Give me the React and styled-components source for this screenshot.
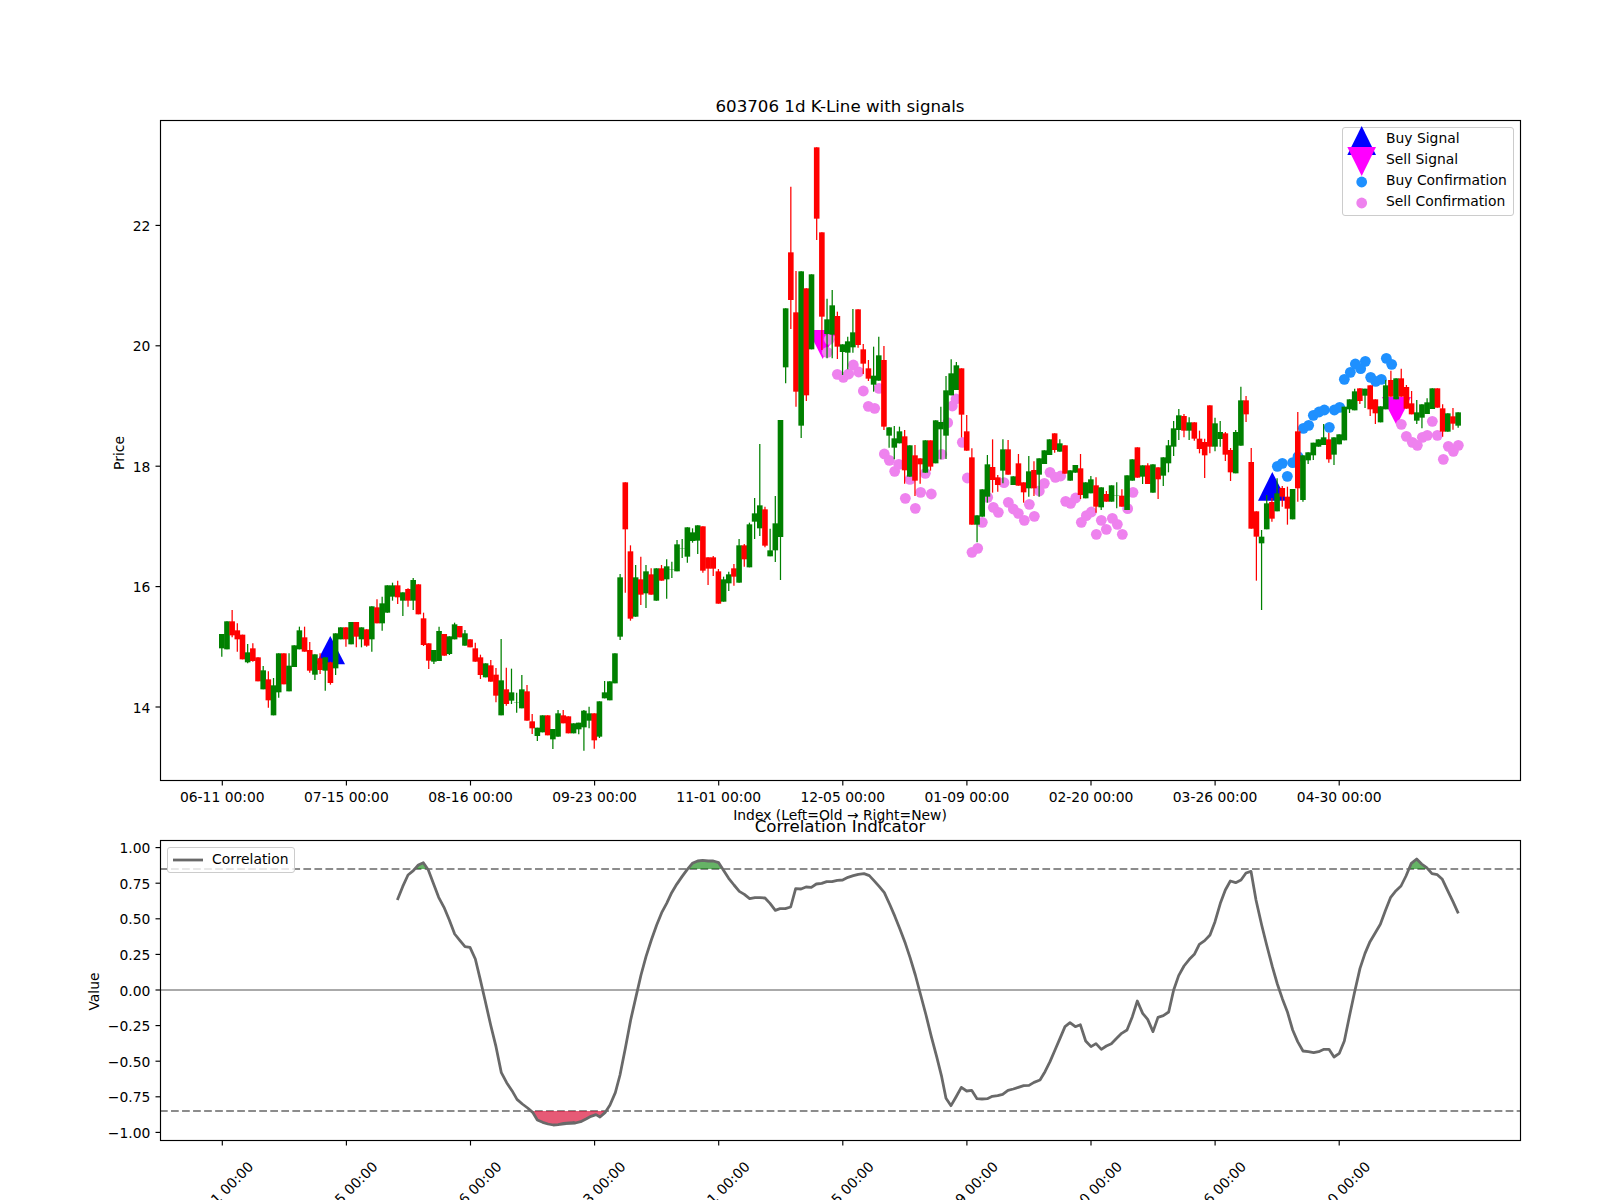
import React from "react";
import styled, { createGlobalStyle } from "styled-components";

const GlobalStyle = createGlobalStyle`
  body {
    margin: 0;
    background: #fff;
    font-family: "DejaVu Sans", sans-serif;
  }
`;

const Figure = styled.div`
  display: flex;
  flex-direction: column;
  width: 1600px;
  height: 1200px;
  overflow: hidden;
  background: #fff;
`;

const Panel = styled.div`
  position: relative;
  flex: none;
  width: 1600px;
  height: ${(p) => p.$h}px;
`;

const Plot = styled.svg`
  display: block;
  overflow: visible;
`;

const Frame = styled.rect`
  fill: none;
  stroke: #000;
  stroke-width: 1.15;
`;

const Tick = styled.line`
  stroke: #000;
  stroke-width: 1.15;
`;

const TickLabel = styled.text`
  font-family: "DejaVu Sans", sans-serif;
  font-size: 13.89px;
  fill: #000;
  text-anchor: ${(p) => p.$anchor || "middle"};
`;

const Title = styled.text`
  font-family: "DejaVu Sans", sans-serif;
  font-size: 16.67px;
  fill: #000;
  text-anchor: middle;
`;

const Wick = styled.line`
  stroke: ${(p) => (p.$c === "G" ? "#008000" : "#ff0000")};
  stroke-width: 1.25;
`;

const Body = styled.rect`
  fill: ${(p) => (p.$c === "G" ? "#008000" : "#ff0000")};
`;

const Dot = styled.circle`
  fill: ${(p) => p.$color};
`;

const Marker = styled.polygon`
  fill: ${(p) => p.$color};
`;

const Level = styled.line`
  stroke: #8c8c8c;
  stroke-width: 2.08;
  stroke-dasharray: 7.7 3.33;
`;

const ZeroLine = styled.line`
  stroke: #aaaaaa;
  stroke-width: 2.08;
`;

const CorrLine = styled.polyline`
  fill: none;
  stroke: #696969;
  stroke-width: 2.78;
  stroke-linejoin: round;
`;

const CorrFill = styled.polygon`
  fill: ${(p) => p.$color};
  fill-opacity: ${(p) => p.$alpha};
`;

const LegendBox = styled.div`
  position: absolute;
  box-sizing: border-box;
  left: ${(p) => p.$left}px;
  top: ${(p) => p.$top}px;
  width: ${(p) => p.$w}px;
  height: ${(p) => p.$h}px;
  padding-top: ${(p) => p.$padTop || 0}px;
  display: flex;
  flex-direction: column;
  background: rgba(255, 255, 255, 0.8);
  border: 1.1px solid #cccccc;
  border-radius: 3px;
`;

const LegendRow = styled.div`
  display: flex;
  align-items: center;
  height: 21px;
  font-size: 13.89px;
  line-height: 21px;
  color: #000;
  white-space: nowrap;
`;

const LegendKey = styled.svg`
  flex: none;
  width: ${(p) => p.$w}px;
  height: 21px;
  overflow: visible;
`;

// each block is read in its own y offset, coordinates are 3x, [colour, top, bottom, high, low]
const blocks = [
  [560, [
    ["G",222,265,222,290],["G",184,268],["R",184,226,150,232],["R",211,238,190,275],["R",224,298],
    ["G",277,307,252,310],["R",265,303,250,305],["R",292,364],["G",331,388,318,388],["R",358,421,334,443],
    ["G",376,466,354,466],["G",280,397,280,413],["R",280,373],["G",317,394,280,394],["G",256,321],
    ["G",211,268,200,268],["R",232,275,200,275],["R",270,332,246,338],["G",283,344,283,360],["R",295,330,280,342],
    ["G",292,332,292,392],["R",307,369,305,374],["G",220,325,220,345],["G",202,238],["R",202,238,202,260],
    ["G",186,253],["R",186,230,186,262],["G",202,238,202,262],["R",208,257,208,260],["G",139,238,139,275],
    ["R",142,190,118,190],["G",130,190,110,212],["G",76,158],["G",76,110,68,122],["R",76,112,62,132],
    ["G",97,122,97,168],["R",87,122,85,140],["G",60,122,54,150],["R",73,163],["R",175,255,158,258],
    ["R",250,302,250,327],["G",270,305,270,312],["G",213,303,200,303],["R",222,287],["G",229,282,229,285],
    ["G",193,238,188,238],["R",198,232],["G",220,257,210,257],["R",238,262],["R",265,305,248,305],
    ["R",292,345,284,357],["G",310,352],["R",316,365,300,365],["R",344,407,324,427],["G",361,466,237,466],
    ["R",388,432,323,437],["G",397,422,326,432],["G",428,429,398,458],["G",388,445,345,445],["R",394,482,375,482],
    ["R",484,505,462,522],["G",503,528,503,543],["G",466,517],["R",466,526],["G",507,538,507,567],
    ["G",460,530,450,530],["R",466,490,450,490],["R",469,520],["G",490,520],["G",488,508,488,523],
    ["G",452,502,450,572],["G",460,482,440,505],["R",460,541,460,566],["G",424,530,424,534],["G",397,415,363,415],
    ["G",364,421],["G",280,370],
  ]],
  [440, [
    ["G",412,590,402,600],["R",127,268,127,458],["R",334,536,316,542],["G",412,530,375,530],["R",418,464,350,495],
    ["G",394,460,375,504],["R",403,464,385,464],["G",385,482],["R",385,422,375,422],["G",379,418,358,476],
    ["G",389,390,365,414],["G",313,394,300,394],["G",325,326,297,354],["G",262,350,262,368],["G",277,303,265,308],
    ["G",256,302,256,342],["R",259,392,259,398],["R",352,386,352,435],["R",352,386,348,408],["R",394,491,387,491],
    ["G",418,485,410,485],["G",403,430,395,453],["R",385,410,372,437],["G",316,428,297,428],["R",316,358,312,380],
    ["G",253,382,248,382],["G",220,245,174,297],["G",196,265,12,288],["R",208,317,200,322],["G",331,349,266,349],
    ["G",250,331,168,366],
  ]],
  [130, [
    ["G",870,1221,870,1350],["G",535,712,535,760],["R",367,510,170,597],["R",547,785,423,830],["G",424,887,424,924],
    ["R",475,796,475,813],["G",433,658],["R",52,266,52,330],["R",307,560,307,660],["G",568,612,506,685],
    ["G",526,614,480,685],["R",558,650,545,687],["G",643,666,643,735],["G",634,668,620,718],["G",607,652,537,668],
    ["R",538,645,538,653],["R",658,701,642,732],["R",715,746,690,753],["G",737,764,650,785],["G",676,752,620,752],
  ]],
  [320, [
    ["R",120,320,78,330],["G",322,347,322,383],["G",355,383,318,418],["G",334,370,320,370],["R",349,451,330,491],
    ["G",376,470],["R",406,482,375,528],["R",415,433,415,491],["G",361,458],["R",361,440,361,452],
    ["G",301,430],["G",306,328,260,418],["G",211,347,168,417],["G",160,226,118,226],["G",136,210,126,210],
    ["R",145,284,145,352],["R",334,392,285,392],["R",412,614,385,614],["G",586,614,586,667],["G",508,590],
    ["G",433,530,405,548],["R",441,480,358,518],["R",472,495,465,515],["G",388,452,358,490],["R",388,464,360,464],
    ["G",469,495],["R",430,497,402,497],["R",487,517,487,548],["G",454,505,408,530],["R",450,505,424,528],
    ["G",415,464,415,530],["G",391,432],["G",358,405],["R",340,390,340,398],["G",370,395,358,395],
    ["R",376,461],["G",451,482],["G",435,458],["R",445,525,402,537],["G",487,535],
    ["G",478,520,468,520],["R",496,560,472,578],["G",502,562,502,570],["R",522,545,513,545],["G",496,545],
    ["G",526,527,487,565],["R",527,560,508,560],["G",466,570],["G",418,482],["R",382,473],
  ]],
  [380, [
    ["G",256,290,256,312],["R",256,312,250,312],["G",253,338],["R",262,298,262,357],["G",232,287,232,318],
    ["G",196,250,180,277],["G",145,200,123,228],["G",106,150,87,180],["R",108,152,102,172],["G",127,152,112,180],
    ["R",127,176,127,182],["R",176,207,152,220],["R",186,226,176,294],["R",76,200,76,220],["G",130,200,113,214],
    ["G",156,177,123,200],["R",160,224,156,243],["R",210,277,204,303],["G",156,280,150,280],["G",61,197,20,197],
    ["R",61,103,48,126],
  ]],
  [330, [
    ["R",396,596,354,596],["R",544,620,544,752],["G",620,640,600,840],["G",520,598,495,598],["R",516,566,504,575],
    ["G",490,544,445,544],["R",474,500,468,530],["R",500,536,470,584],["G",477,568],["R",304,475,246,515],
    ["G",376,510,376,515],["G",367,391,367,402],["G",338,376,338,390],["G",328,350],["G",322,345,282,345],
    ["R",328,388,308,398],["G",322,374,322,405],["G",313,343],["G",230,331],["G",208,238,208,249],
    ["G",184,241,176,241],["R",175,213,175,222],["G",176,197,176,234],["R",166,238,166,258],["R",208,250,208,282],
    ["G",229,277],["G",166,238,150,238],["R",150,200,122,200],["G",145,208],["R",145,200,116,200],
    ["R",171,236,165,236],["R",220,253,183,253],["G",247,272,210,282],["G",223,263,223,295],["G",217,252,205,252],
    ["G",175,237],["R",175,233],["R",235,305,223,320],["G",250,305],["R",259,281,234,299],
    ["G",247,287,247,293],
  ]],
];

const candles = blocks.flatMap(([y0, rows]) =>
  rows.map(([c, top, bot, hi, lo]) => ({
    c,
    top: y0 + top / 3,
    bot: y0 + bot / 3,
    hi: y0 + (hi ?? top) / 3,
    lo: y0 + (lo ?? bot) / 3,
  }))
);

const xOf = (i) => 221.8 + 5.173 * i;

const sellA = [[82,97],[88,58],[112,163],[130,172],[146,162],[160,135],[176,156],[190,213],[205,259],[224,265],[237,205],
  [253,402],[268,421],[284,454],[296,433],[316,535],[346,565],[362,517],[394,522],[376,460],[330,478],[425,403],[443,308],
  [457,258],[468,237],[487,367],[502,474],[516,697],[533,685],[547,607],[563,532],[580,562],[595,577],[625,547],[640,567],
  [655,580],[673,601],[688,553],[703,589],[718,513],[733,490],[612,488],[750,457],[766,472],[782,468],[797,544],[812,550],
  [827,534],[844,607],[859,587],[874,576],[889,643],[904,601],[919,628],[937,595],[952,613],[967,643],[983,566],[999,517]];
const sellB = [[604,283],[619,319],[637,337],[652,346],[667,322],[682,316],[697,274],[712,316],[730,388],[745,349],[760,364],[775,346]];
const buyDots = [[232,409],[247,400],[262,439],[278,398],[294,380],[310,295],[326,286],[340,256],[357,246],[373,240],[388,292],
  [403,240],[419,232],[433,148],[451,127],[466,102],[482,116],[496,94],[512,142],[527,154],[544,148],[559,85],[575,103]];

const sellDots = [
  ...sellA.map(([x, y]) => [800 + x / 3, 320 + y / 3]),
  ...sellB.map(([x, y]) => [1200 + x / 3, 330 + y / 3]),
];
const blueDots = buyDots.map(([x, y]) => [1200 + x / 3, 330 + y / 3]);

const corrA = [[952,360],[968,320],[984,285],[1000,272],[1015,255],[1030,248],[1045,270],[1060,310],[1076,352],[1092,382],[1108,420],[1124,462],
  [1140,482],[1155,500],[1170,502],[1186,537],[1200,595],[1215,660],[1232,735],[1248,800],[1264,878],[1280,908],[1296,932],[1311,958],[1327,972],
  [1343,984],[1358,997],[1372,1020],[1388,1027],[1404,1032],[1420,1035],[1435,1034],[1451,1030],[1467,1029],[1483,1028]];
const corrB = [[0,973],[15,971],[31,970],[46,969],[62,965],[78,957],[93,949],[108,944],[120,951],[135,938],[150,915],[166,878],[180,825],[196,745],
  [212,660],[228,590],[243,525],[258,470],[274,420],[290,375],[305,338],[320,310],[335,278],[350,253],[366,230],[382,208],[397,190],[413,183],[428,181],
  [445,183],[460,183],[476,188],[490,210],[506,235],[522,255],[538,274],[553,283],[569,296],[585,293],[600,293],[615,294],[630,310],[646,331],[660,326],
  [676,326],[692,321],[707,266],[723,267],[738,261],[754,262],[769,252],[785,250],[800,245],[816,245],[832,241],[848,240],[864,232],[880,227],[895,223],
  [912,221],[928,227],[944,244],[958,260],[973,278],[990,315],[1005,350],[1020,388],[1036,430],[1050,472],[1066,525],[1082,585],[1098,645],[1114,710],
  [1130,770],[1145,830],[1158,895],[1173,917],[1188,891],[1204,862],[1220,873],[1235,871],[1251,896],[1266,897],[1282,896],[1297,889],[1313,887],
  [1328,883],[1344,871],[1360,867],[1375,862],[1391,857],[1407,856],[1422,847]];
const corrC = [[0,840],[15,815],[30,785],[45,750],[60,715],[75,680],[90,668],[106,680],[121,674],[137,723],[153,740],[168,731],[184,748],[199,738],
  [214,731],[230,715],[245,700],[261,690],[277,650],[292,603],[308,640],[323,658],[339,695],[354,652],[370,647],[386,636],[401,570],[416,527],[432,498],
  [448,478],[463,463],[478,433],[494,422],[510,405],[525,365],[541,310],[556,270],[571,243],[587,248],[603,240],[618,219],[633,214],[648,300],[665,375],
  [680,435],[697,500],[712,552],[727,596],[742,635],[758,690],[773,725],[789,753],[805,755],[821,758],[836,755],[852,748],[867,748],[882,771],[898,760],
  [913,723],[928,650],[944,575],[960,505],[975,460],[990,425],[1006,398],[1021,373],[1036,332],[1052,292],[1068,272],[1083,258],[1098,228],[1114,190],
  [1130,177],[1145,192],[1160,203],[1176,221],[1192,224],[1207,238],[1223,272],[1239,305],[1255,340]];

const corr = [
  ...corrA.map(([x, y]) => [80 + x / 3, 780 + y / 3]),
  ...corrB.map(([x, y]) => [560 + x / 3, 800 + y / 3]),
  ...corrC.map(([x, y]) => [1040 + x / 3, 800 + y / 3]),
];
const corrPoints = corr.map((p) => p.join(",")).join(" ");

const dates = ["06-11 00:00", "07-15 00:00", "08-16 00:00", "09-23 00:00", "11-01 00:00", "12-05 00:00", "01-09 00:00", "02-20 00:00", "03-26 00:00", "04-30 00:00"];
const tickX = (k) => 222.3 + 124.1 * k;
const prices = [14, 16, 18, 20, 22];
const priceY = (p) => 707 - 60.2 * (p - 14);
const values = ["1.00", "0.75", "0.50", "0.25", "0.00", "\u22120.25", "\u22120.50", "\u22120.75", "\u22121.00"];
const valueY = (k) => 847.6 + 35.6 * k;

const signals = [
  { color: "#0000ff", points: "330.3,636 345,664.3 315.6,664.3" },
  { color: "#0000ff", points: "1272.3,472 1287,500.7 1258,500.7" },
  { color: "#ff00ff", points: "808,330 837.5,330 822.7,359" },
  { color: "#ff00ff", points: "1382,397 1411,397 1396.7,425.5" },
];

function PriceChart() {
  return (
    <Plot width="1600" height="800" viewBox="0 0 1600 800">
      <Title x="840" y="112">603706 1d K-Line with signals</Title>
      {signals.map((s, i) => (
        <Marker key={i} $color={s.color} points={s.points} />
      ))}
      {blueDots.map(([x, y], i) => (
        <Dot key={i} cx={x} cy={y} r="5.4" $color="#1e90ff" />
      ))}
      {sellDots.map(([x, y], i) => (
        <Dot key={i} cx={x} cy={y} r="5.4" $color="#ee82ee" />
      ))}
      {candles.map((d, i) => (
        <g key={i}>
          <Wick $c={d.c} x1={xOf(i)} x2={xOf(i)} y1={d.hi} y2={d.lo} />
          <Body $c={d.c} x={xOf(i) - 2.8} y={d.top} width="5.6" height={d.bot - d.top} />
        </g>
      ))}
      <Frame x="160.5" y="120.5" width="1360" height="660" />
      {dates.map((d, k) => (
        <g key={d}>
          <Tick x1={tickX(k)} x2={tickX(k)} y1="780.5" y2="785.5" />
          <TickLabel x={tickX(k)} y="801.5">{d}</TickLabel>
        </g>
      ))}
      {prices.map((p) => (
        <g key={p}>
          <Tick x1="155.5" x2="160.5" y1={priceY(p)} y2={priceY(p)} />
          <TickLabel $anchor="end" x="150.3" y={priceY(p) + 5.5}>{p}</TickLabel>
        </g>
      ))}
      <TickLabel transform="translate(124 453) rotate(-90)">Price</TickLabel>
      <TickLabel x="840" y="820">Index (Left=Old → Right=New)</TickLabel>
    </Plot>
  );
}

function CorrelationChart() {
  return (
    <Plot width="1600" height="400" viewBox="0 800 1600 400">
      <defs>
        <clipPath id="above">
          <rect x="160" y="840" width="1360" height="29" />
        </clipPath>
        <clipPath id="below">
          <rect x="160" y="1111" width="1360" height="29" />
        </clipPath>
      </defs>
      <Title x="840" y="832">Correlation Indicator</Title>
      <ZeroLine x1="160" x2="1520" y1="990" y2="990" />
      <Level x1="160" x2="1520" y1="869" y2="869" />
      <Level x1="160" x2="1520" y1="1111" y2="1111" />
      <CorrFill $color="#008000" $alpha="0.6" clipPath="url(#above)" points={corrPoints} />
      <CorrFill $color="#dc143c" $alpha="0.7" clipPath="url(#below)" points={corrPoints} />
      <CorrLine points={corrPoints} />
      <Frame x="160.5" y="840.5" width="1360" height="300" />
      {dates.map((d, k) => (
        <g key={d}>
          <Tick x1={tickX(k)} x2={tickX(k)} y1="1140.5" y2="1145.5" />
          <TickLabel transform={`translate(${tickX(k) - 1.5} 1194) rotate(-45)`} y="5">{d}</TickLabel>
        </g>
      ))}
      {values.map((v, k) => (
        <g key={v}>
          <Tick x1="155.5" x2="160.5" y1={valueY(k)} y2={valueY(k)} />
          <TickLabel $anchor="end" x="150.3" y={valueY(k) + 5.5}>{v}</TickLabel>
        </g>
      ))}
      <TickLabel transform="translate(99 991.5) rotate(-90)">Value</TickLabel>
    </Plot>
  );
}

export default function App() {
  return (
    <>
      <GlobalStyle />
      <Figure>
        <Panel $h={800}>
          <PriceChart />
          <LegendBox $left={1342} $top={127} $w={171.5} $h={89}>
            <LegendRow>
              <LegendKey $w={43} viewBox="0 0 43 21">
                <polygon points="18.7,-2 33,27 4.3,27" fill="#0000ff" />
              </LegendKey>
              Buy Signal
            </LegendRow>
            <LegendRow>
              <LegendKey $w={43} viewBox="0 0 43 21">
                <polygon points="4.3,-2 33,-2 18.7,27" fill="#ff00ff" />
              </LegendKey>
              Sell Signal
            </LegendRow>
            <LegendRow>
              <LegendKey $w={43} viewBox="0 0 43 21">
                <circle cx="18.7" cy="12" r="5.4" fill="#1e90ff" />
              </LegendKey>
              Buy Confirmation
            </LegendRow>
            <LegendRow>
              <LegendKey $w={43} viewBox="0 0 43 21">
                <circle cx="18.7" cy="12" r="5.4" fill="#ee82ee" />
              </LegendKey>
              Sell Confirmation
            </LegendRow>
          </LegendBox>
        </Panel>
        <Panel $h={400}>
          <CorrelationChart />
          <LegendBox $left={167} $top={47} $w={127.5} $h={25.5} $padTop={1}>
            <LegendRow>
              <LegendKey $w={44} viewBox="0 0 44 21">
                <line x1="5" x2="35" y1="11" y2="11" stroke="#696969" strokeWidth="2.78" />
              </LegendKey>
              Correlation
            </LegendRow>
          </LegendBox>
        </Panel>
      </Figure>
    </>
  );
}
